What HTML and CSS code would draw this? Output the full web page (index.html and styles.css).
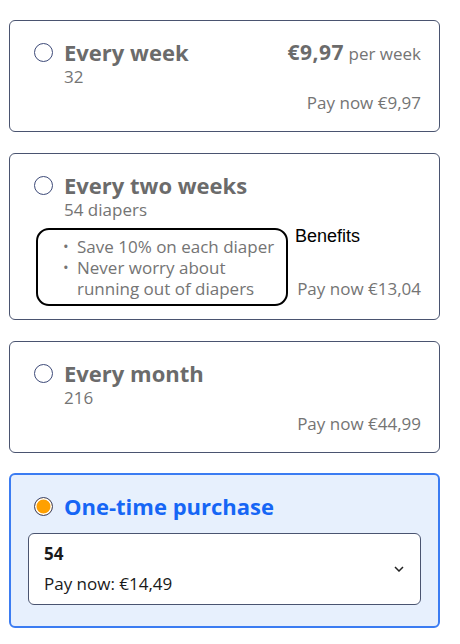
FILE: index.html
```html
<!DOCTYPE html>
<html lang="en">
<head>
    <meta charset="UTF-8">
    <title>Subscription options</title>
    <link rel="stylesheet" href="styles.css">
</head>
<body>
    <div class="plans">
        <div class="plan">
            <div class="plan-top">
                <span class="radio"></span>
                <div class="plan-info">
                    <div class="plan-title">Every week</div>
                    <div class="plan-sub">32</div>
                </div>
                <div class="plan-price"><b>€9,97</b> per week</div>
            </div>
            <div class="plan-bottom">
                <div class="pay">Pay now €9,97</div>
            </div>
        </div>

        <div class="plan with-benefits">
            <div class="plan-top">
                <span class="radio"></span>
                <div class="plan-info">
                    <div class="plan-title">Every two weeks</div>
                    <div class="plan-sub">54 diapers</div>
                </div>
            </div>
            <div class="plan-bottom">
                <ul class="benefits">
                    <li>Save 10% on each diaper</li>
                    <li>Never worry about running out of diapers</li>
                </ul>
                <div class="side">
                    <div class="note">Benefits</div>
                    <div class="pay">Pay now €13,04</div>
                </div>
            </div>
        </div>

        <div class="plan">
            <div class="plan-top">
                <span class="radio"></span>
                <div class="plan-info">
                    <div class="plan-title">Every month</div>
                    <div class="plan-sub">216</div>
                </div>
            </div>
            <div class="plan-bottom">
                <div class="pay">Pay now €44,99</div>
            </div>
        </div>

        <div class="plan selected">
            <div class="plan-top">
                <span class="radio checked"></span>
                <div class="plan-info">
                    <div class="plan-title">One-time purchase</div>
                </div>
            </div>
            <div class="select">
                <div class="select-text">
                    <div class="select-qty">54</div>
                    <div class="select-pay">Pay now: €14,49</div>
                </div>
                <svg class="chevron" width="10" height="6" viewBox="0 0 10 6">
                    <path d="M1 1l4 4 4-4" fill="none" stroke="#222" stroke-width="1.5"/>
                </svg>
            </div>
        </div>
    </div>
</body>
</html>
```

FILE: styles.css
```css
body {
    margin: 0;
    font-family: "Open Sans", "Noto Sans", sans-serif;
    background: #fff;
}

.plans {
    width: 431px;
    margin: 20px 0 0 9px;
    display: flex;
    flex-direction: column;
    gap: 21px;
}

.plan {
    border: 1px solid #4a5470;
    border-radius: 6px;
    padding: 18px 18px 17px 24px;
    color: #6b6b6b;
}

.plan.with-benefits {
    padding-bottom: 19px;
}

.plan-top {
    display: flex;
    align-items: flex-start;
}

.radio {
    width: 17px;
    height: 17px;
    border: 1.5px solid #3d4a78;
    border-radius: 50%;
    margin: 4px 11px 0 0;
    flex-shrink: 0;
    box-sizing: content-box;
}

.radio.checked {
    background: #ffa000;
    box-shadow: inset 0 0 0 1.5px #fff;
}

.plan-info {
    flex: 1;
}

.plan-title {
    font-size: 22px;
    font-weight: 700;
    line-height: 26px;
}

.plan-sub {
    margin-top: 2px;
    font-size: 17px;
    line-height: 20px;
    color: #747474;
}

.plan-price {
    font-size: 17px;
    line-height: 26px;
    color: #747474;
}

.plan-price b {
    font-size: 21px;
    letter-spacing: 0.5px;
    color: #6b6b6b;
}

.plan-bottom {
    display: flex;
    justify-content: flex-end;
    align-items: flex-end;
    margin-top: 5px;
}

.pay {
    font-size: 17px;
    line-height: 22px;
    text-align: right;
    color: #747474;
}

.benefits {
    width: 252px;
    margin: 3px 0 -6px 2px;
    padding: 6px 6px 5px 25px;
    border: 2px solid #000;
    border-radius: 13px;
    list-style: none;
    font-size: 17px;
    line-height: 21px;
    color: #747474;
    box-sizing: border-box;
}

.benefits li {
    position: relative;
    padding-left: 14px;
}

.benefits li::before {
    content: "•";
    position: absolute;
    left: 0;
    font-size: 15px;
}

.side {
    flex: 1;
    align-self: stretch;
    display: flex;
    flex-direction: column;
    justify-content: space-between;
    padding-left: 7px;
}

.note {
    font-family: "Liberation Sans", Arial, sans-serif;
    font-size: 18px;
    color: #000;
    line-height: 20px;
    margin-top: 1px;
}

.plan.selected {
    margin-top: -1px;
    border: 2px solid #3b7cf2;
    background: #e7f0fd;
    padding: 18px 17px 21px 23px;
}

.plan.selected .plan-title {
    color: #1666f5;
}

.select {
    display: flex;
    align-items: center;
    margin: 14px 0 0 -6px;
    padding: 9px 16px 9px 15px;
    background: #fff;
    border: 1px solid #4a5470;
    border-radius: 6px;
}

.select-text {
    flex: 1;
    color: #1a1a1a;
    font-size: 17px;
}

.select-qty {
    font-weight: 700;
    line-height: 22px;
}

.select-pay {
    margin-top: 8px;
    line-height: 22px;
}
```
